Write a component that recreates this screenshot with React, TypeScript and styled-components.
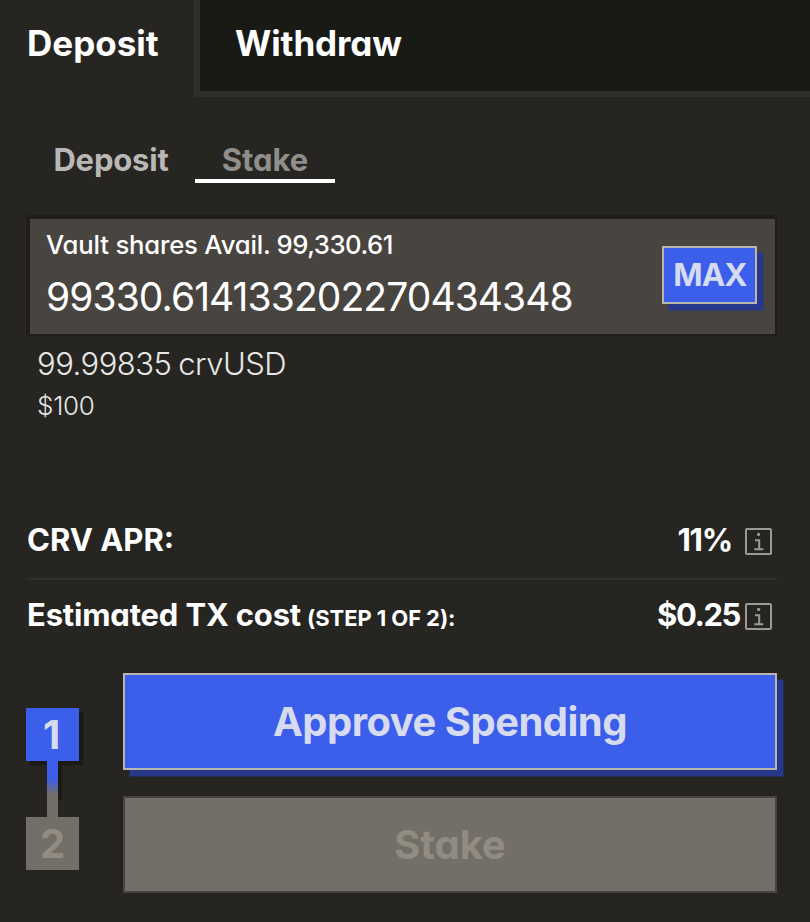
import React from 'react';
import styled, { createGlobalStyle } from 'styled-components';

const Global = createGlobalStyle`
  *, *::before, *::after { box-sizing: border-box; }
  body { margin: 0; background: #262521; }
  button { font: inherit; margin: 0; padding: 0; cursor: pointer; }
`;

const Panel = styled.main`
  display: flex;
  flex-direction: column;
  width: 810px;
  height: 922px;
  overflow: hidden;
  background: #262521;
  color: #fff;
  font-family: Inter, 'Liberation Sans', sans-serif;
  font-feature-settings: 'cv11';
`;

const Label = styled.span<{ $size: number; $weight: number; $spacing?: number }>`
  font-size: ${(p) => p.$size}px;
  font-weight: ${(p) => p.$weight};
  letter-spacing: ${(p) => p.$spacing ?? 0}px;
  white-space: nowrap;
`;

const Header = styled.nav`
  display: flex;
  flex: none;
  height: 97px;
`;

const HeaderTab = styled.button<{ $active?: boolean }>`
  flex: ${(p) => (p.$active ? '0 0 194px' : '1')};
  padding: 0 0 ${(p) => (p.$active ? 12 : 6)}px ${(p) => (p.$active ? 27 : 35)}px;
  border: 0 solid #302f2b;
  border-width: ${(p) => (p.$active ? '0' : '0 0 6px 6px')};
  background: ${(p) => (p.$active ? 'transparent' : '#191916')};
  color: #fff;
  text-align: left;
`;

const Body = styled.section`
  display: flex;
  flex-direction: column;
  padding: 42px 33px 0 26px;
`;

const SubTabs = styled.nav`
  display: flex;
  height: 44px;
`;

const SubTab = styled.button<{ $active?: boolean }>`
  width: ${(p) => (p.$active ? 140 : 169)}px;
  border: 0 solid #fff;
  border-bottom-width: ${(p) => (p.$active ? 4 : 0)}px;
  padding: ${(p) => (p.$active ? '0' : '0 0 4px 1px')};
  background: transparent;
  color: ${(p) => (p.$active ? '#8f8e8b' : '#b9b8b6')};
`;

const InputBox = styled.div`
  display: flex;
  justify-content: space-between;
  height: 121px;
  margin-top: 32px;
  padding: 0 18px 0 16px;
  border: solid #1f1e1b;
  border-width: 4px 2px 2px 4px;
  background: #48443f;
`;

const InputText = styled.div`
  display: flex;
  flex-direction: column;
  line-height: 52px;
`;

const Availability = styled.div`
  display: flex;
  gap: 6px;
  height: 52px;
`;

const MaxButton = styled.button`
  width: 95px;
  height: 58px;
  margin-top: 27px;
  padding: 0 0 1px 1px;
  border: 2px solid #b9b6ae;
  background: #3b5eeb;
  color: #d6dbf0;
  box-shadow: 6.5px 6.5px 0 #27378a;
`;

const Conversion = styled.div`
  display: flex;
  flex-direction: column;
  height: 167px;
  padding: 6px 0 0 11px;
  color: #e8e7e5;
`;

const ConversionLine = styled.div`
  display: flex;
  align-items: center;
  height: 42px;
  word-spacing: -1.5px;
`;

const DetailRow = styled.div<{ $divided?: boolean }>`
  display: flex;
  align-items: center;
  justify-content: space-between;
  height: ${(p) => (p.$divided ? 77 : 68)}px;
  border-bottom: ${(p) => (p.$divided ? '2px solid #302f2b' : '0')};
  padding: 0 5px ${(p) => (p.$divided ? 3 : 0)}px 1px;
`;

const DetailName = styled.span`
  display: flex;
  align-items: baseline;
  gap: 6px;
`;

const DetailValue = styled.span<{ $gap: number }>`
  display: flex;
  align-items: center;
  gap: ${(p) => p.$gap}px;
  svg { margin-top: 4px; }
`;

const Actions = styled.div`
  display: flex;
  margin-top: 25px;
`;

const Steps = styled.div`
  display: flex;
  flex-direction: column;
  align-items: center;
  width: 53px;
  margin: 35px 44px 0 0;
`;

const StepBox = styled.div<{ $active?: boolean }>`
  width: 53px;
  height: 53px;
  padding-right: ${(p) => (p.$active ? 2 : 0)}px;
  line-height: 53px;
  text-align: center;
  background: ${(p) => (p.$active ? '#3b5eeb' : '#736e67')};
  color: ${(p) => (p.$active ? '#d6dbf0' : '#918c81')};
  box-shadow: ${(p) => (p.$active ? '4px 4px 1px #191916' : 'none')};
`;

const Connector = styled.div`
  display: flex;
  flex-direction: column;
  width: 11px;
  height: 56px;
  background: #736e67;
  &::before {
    content: '';
    height: 35px;
    background: linear-gradient(#3b5eeb 50%, #736e67 96%);
    box-shadow: 4px 4px 1px #191916;
    clip-path: inset(0 -6px -6px 0);
  }
  &::after {
    content: '';
    position: relative;
    height: 21px;
    background: #736e67;
  }
`;

const Buttons = styled.div`
  display: flex;
  flex-direction: column;
  gap: 26px;
  flex: 1;
`;

const ActionButton = styled.button<{ $primary?: boolean }>`
  height: 97px;
  border: 2px solid ${(p) => (p.$primary ? '#b9b6ae' : '#48443f')};
  background: ${(p) => (p.$primary ? '#3b5eeb' : '#736e67')};
  color: ${(p) => (p.$primary ? '#d6dbf0' : '#918c81')};
  box-shadow: ${(p) => (p.$primary ? '6.5px 6.5px 0 #27378a' : 'none')};
`;

const InfoIcon = () => (
  <svg width="27" height="27" viewBox="0 0 27 27" fill="none" stroke="#9b9a98" strokeWidth="2">
    <rect x="1" y="1" width="25" height="25" rx="1" />
    <path d="M10 12.2h4.2v8.8M9.3 21.3h9" />
    <circle cx="13.6" cy="6.4" r="1.6" fill="#9b9a98" stroke="none" />
  </svg>
);

export default function App() {
  return (
    <Panel>
      <Global />
      <Header>
        <HeaderTab $active><Label $size={35} $weight={700}>Deposit</Label></HeaderTab>
        <HeaderTab><Label $size={35} $weight={700} $spacing={-0.1}>Withdraw</Label></HeaderTab>
      </Header>
      <Body>
        <SubTabs>
          <SubTab><Label $size={31} $weight={700} $spacing={-0.2}>Deposit</Label></SubTab>
          <SubTab $active><Label $size={31} $weight={700}>Stake</Label></SubTab>
        </SubTabs>
        <InputBox>
          <InputText>
            <Availability>
              <Label $size={25.7} $weight={500} $spacing={-0.2}>Vault shares Avail.</Label>
              <Label $size={25.7} $weight={500} $spacing={-0.5}>99,330.61</Label>
            </Availability>
            <Label $size={39} $weight={400} $spacing={-0.92}>99330.614133202270434348</Label>
          </InputText>
          <MaxButton><Label $size={31.5} $weight={700} $spacing={-0.9}>MAX</Label></MaxButton>
        </InputBox>
        <Conversion>
          <ConversionLine><Label $size={31} $weight={300} $spacing={-0.5}>99.99835 crvUSD</Label></ConversionLine>
          <ConversionLine><Label $size={26} $weight={300} $spacing={-0.3}>$100</Label></ConversionLine>
        </Conversion>
        <DetailRow $divided>
          <Label $size={31} $weight={700}>CRV APR:</Label>
          <DetailValue $gap={13}><Label $size={31} $weight={700} $spacing={-1.2}>11%</Label><InfoIcon /></DetailValue>
        </DetailRow>
        <DetailRow>
          <DetailName>
            <Label $size={31} $weight={700} $spacing={-0.18}>Estimated TX cost</Label>
            <Label $size={22} $weight={700} $spacing={-0.08}>(STEP 1 OF 2):</Label>
          </DetailName>
          <DetailValue $gap={5}><Label $size={31} $weight={700} $spacing={-1.4}>$0.25</Label><InfoIcon /></DetailValue>
        </DetailRow>
        <Actions>
          <Steps>
            <StepBox $active><Label $size={40} $weight={700}>1</Label></StepBox>
            <Connector />
            <StepBox><Label $size={40} $weight={700}>2</Label></StepBox>
          </Steps>
          <Buttons>
            <ActionButton $primary><Label $size={40} $weight={700} $spacing={-0.52}>Approve Spending</Label></ActionButton>
            <ActionButton><Label $size={40} $weight={700}>Stake</Label></ActionButton>
          </Buttons>
        </Actions>
      </Body>
    </Panel>
  );
}
